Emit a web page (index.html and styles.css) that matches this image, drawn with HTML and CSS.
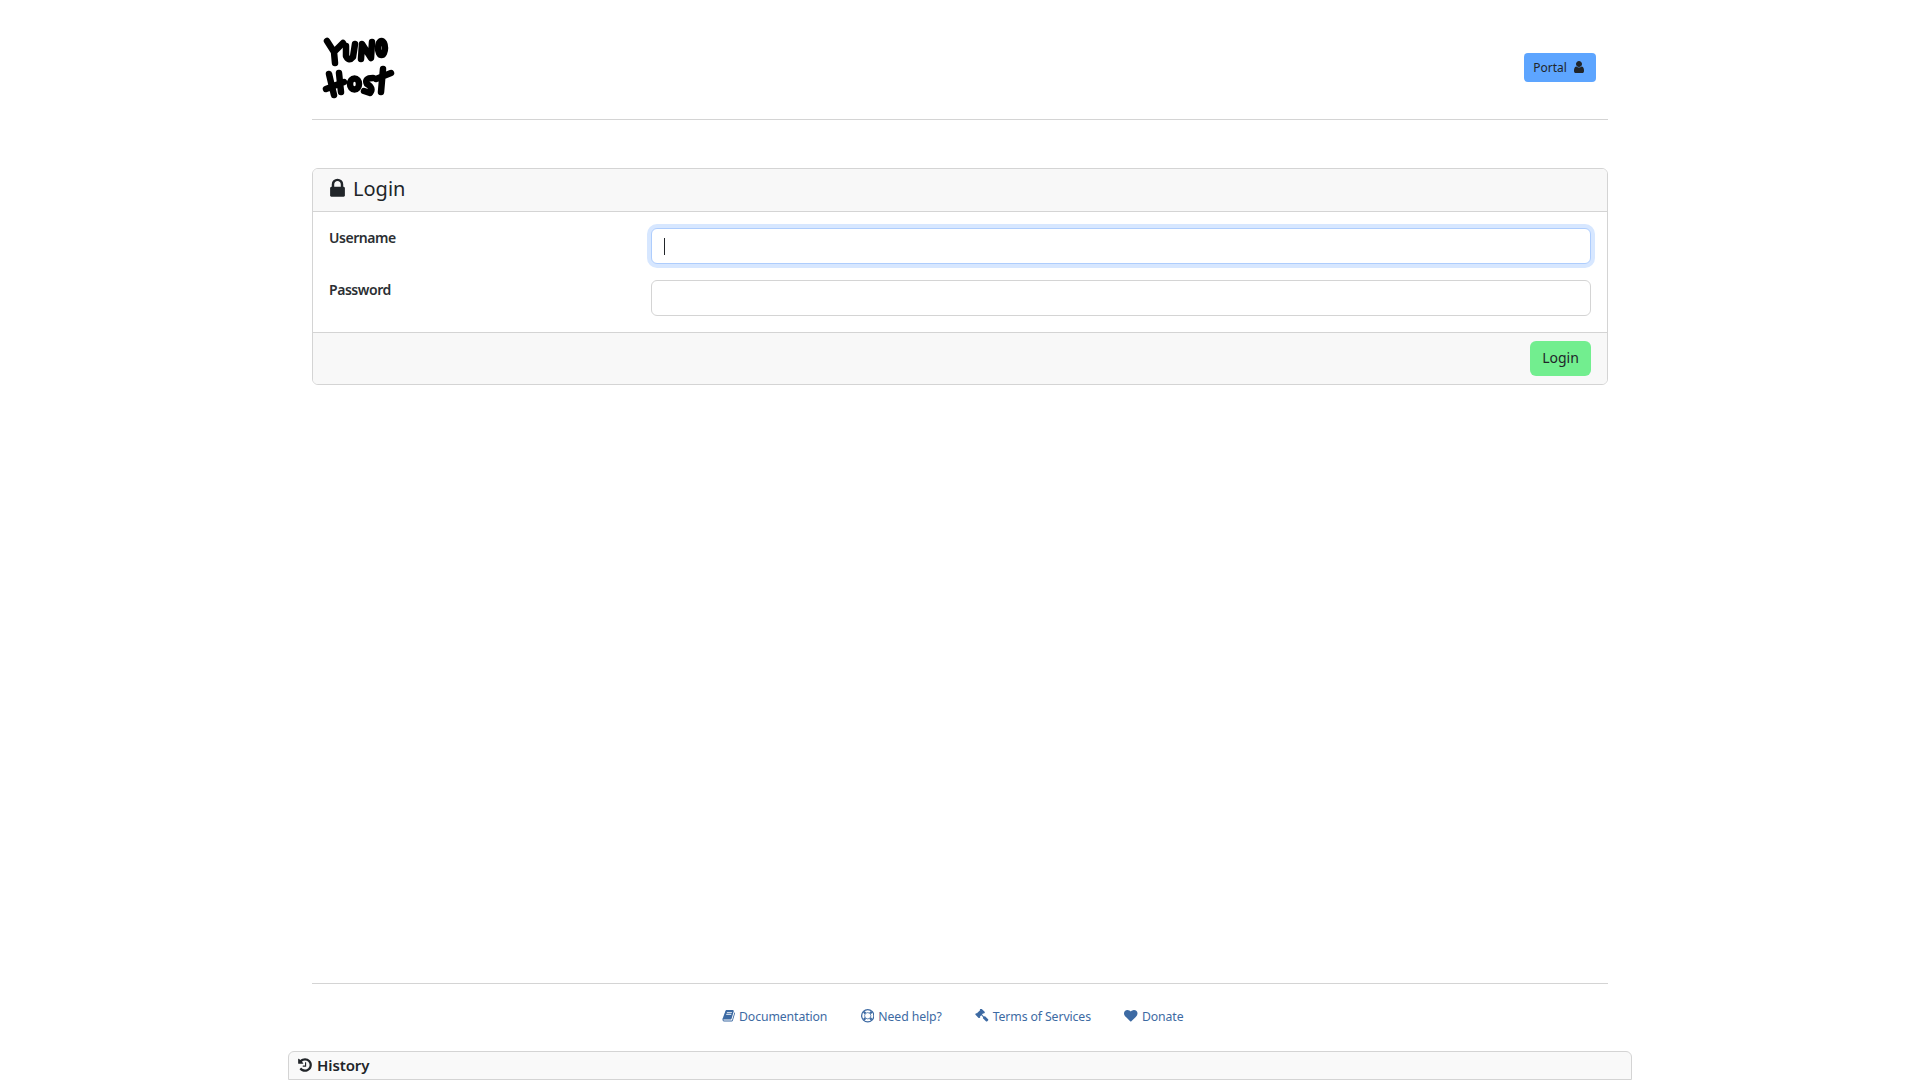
FILE: index.html
```html
<!DOCTYPE html>
<html lang="en">
<head>
<meta charset="utf-8">
<title>YunoHost - Login</title>
<link rel="stylesheet" href="styles.css">
</head>
<body>
<div class="page">
  <header class="topbar">
    <a class="logo" href="#" aria-label="YunoHost">
      <svg class="logo-svg" viewBox="0 0 76 65" aria-hidden="true">
        <g class="logo-strokes">
          <path d="M7 6 L14 17 L23 8 M14 17 L15 28"/>
          <path d="M26 11 L26 21 Q29 27 33 22 L35 9"/>
          <path d="M41 24 L42 9 L51 23 L52 7"/>
          <ellipse cx="61.5" cy="13" rx="3.5" ry="7"/>
          <path d="M9 39 L14 60 M6 54 L24 47 M19 38 L21 57"/>
          <ellipse cx="34.5" cy="49" rx="4.5" ry="5.5"/>
          <path d="M53 43 Q44 43 47 49 Q54 53 50 58 L44 56"/>
          <path d="M63 34 L61 57 M56 44 L71 38"/>
        </g>
      </svg>
    </a>
    <a class="btn btn-portal" href="#">Portal
      <svg class="icon icon-portal" viewBox="0 0 1792 1792" aria-hidden="true"><path d="M1536 1399q0 109-62.5 187t-150.5 78h-854q-88 0-150.5-78t-62.5-187q0-85 8.5-160.5t31.5-152 58.5-131 94-89 134.5-34.5q131 128 313 128t313-128q76 0 134.5 34.5t94 89 58.5 131 31.5 152 8.5 160.5zm-256-887q0 159-112.5 271.5t-271.5 112.5-271.5-112.5-112.5-271.5 112.5-271.5 271.5-112.5 271.5 112.5 112.5 271.5z"/></svg>
    </a>
  </header>

  <main class="main">
    <form class="card" autocomplete="off">
      <h2 class="card-header">
        <svg class="icon icon-lock" viewBox="0 0 1792 1792" aria-hidden="true"><path d="M640 768h512v-192q0-106-75-181t-181-75-181 75-75 181v192zm832 96v576q0 40-28 68t-68 28h-960q-40 0-68-28t-28-68v-576q0-40 28-68t68-28h32v-192q0-184 132-316t316-132 316 132 132 316v192h32q40 0 68 28t28 68z"/></svg>
        <span>Login</span>
      </h2>
      <div class="card-body">
        <div class="field">
          <label class="field-label" for="username">Username</label>
          <div class="input input-focus" id="username"><span class="caret"></span></div>
        </div>
        <div class="field">
          <label class="field-label" for="password">Password</label>
          <div class="input" id="password"></div>
        </div>
      </div>
      <div class="card-footer">
        <button class="btn btn-login" type="button">Login</button>
      </div>
    </form>
  </main>

  <footer class="footer">
    <nav class="footer-nav">
      <a class="footer-link" href="#"><svg class="icon icon-foot" viewBox="0 0 1792 1792" aria-hidden="true"><path d="M1703 478q40 57 18 129l-275 906q-19 64-76.5 107.5t-122.5 43.5h-923q-77 0-148.5-53.5t-99.5-131.5q-24-67-2-127 0-4 3-27t4-37q1-8-3-21.5t-3-19.5q2-11 8-21t16.5-23.5 16.5-23.5q23-38 45-91.5t30-91.5q3-10 .5-30t-.5-28q3-11 17-28t17-23q21-36 42-92t25-90q1-9-2.5-32t.5-28q4-13 22-30.5t22-22.5q19-26 42.5-84.5t27.5-96.5q1-8-3-25.5t-2-26.5q2-8 9-18t18-23 17-21q8-12 16.5-30.5t15-35 16-36 19.5-32 26.5-23.5 36-11.5 47.5 5.5l-1 3q38-9 51-9h761q74 0 114 56t18 130l-274 906q-36 119-71.5 153.5t-128.5 34.5h-869q-27 0-38 15-11 16-1 43 24 70 144 70h923q29 0 56-15.5t35-41.5l300-987q7-22 5-57 38 15 59 43zm-1064 2q-4 13 2 22.5t20 9.5h608q13 0 25.5-9.5t16.5-22.5l21-64q4-13-2-22.5t-20-9.5h-608q-13 0-25.5 9.5t-16.5 22.5zm-83 256q-4 13 2 22.5t20 9.5h608q13 0 25.5-9.5t16.5-22.5l21-64q4-13-2-22.5t-20-9.5h-608q-13 0-25.5 9.5t-16.5 22.5z"/></svg>Documentation</a>
      <a class="footer-link" href="#"><svg class="icon icon-foot" viewBox="128 128 1536 1536" aria-hidden="true"><g class="ring-strokes"><circle class="ring-outer" cx="896" cy="896" r="696"/><circle class="ring-inner" cx="896" cy="896" r="360"/><path class="ring-spokes" d="M624 624L444 444M1168 624L1348 444M1168 1168L1348 1348M624 1168L444 1348"/></g></svg>Need help?</a>
      <a class="footer-link" href="#"><svg class="icon icon-foot" viewBox="0 0 1792 1792" aria-hidden="true"><path d="M1771 1440q0 53-37 90l-107 108q-39 37-91 37-53 0-90-37l-363-364q-38-36-38-90 0-53 43-96l-256-256-126 126q-14 14-34 14t-34-14q2 2 12.5 12t12.5 13 10 11.5 10 13.5 6 13.5 5.5 16.5 1.5 18q0 38-28 68-3 3-16.5 18t-19 20.5-18.5 16.5-22 15.5-22 9-26 4.5q-40 0-68-28l-408-408q-28-28-28-68 0-13 4.5-26t9-22 15.5-22 16.5-18.5 20.5-19 18-16.5q30-28 68-28 10 0 18 1.5t16.5 5.5 13.5 6 13.5 10 11.5 10 13 12.5 12 12.5q-14-14-14-34t14-34l348-348q14-14 34-14t34 14q-2-2-12.5-12t-12.5-13-10-11.5-10-13.5-6-13.5-5.5-16.5-1.5-18q0-38 28-68 3-3 16.5-18t19-20.5 18.5-16.5 22-15.5 22-9 26-4.5q40 0 68 28l408 408q28 28 28 68 0 13-4.5 26t-9 22-15.5 22-16.5 18.5-20.5 19-18 16.5q-30 28-68 28-10 0-18-1.5t-16.5-5.5-13.5-6-13.5-10-11.5-10-13-12.5-12-12.5q14 14 14 34t-14 34l-126 126 256 256q43-43 96-43 52 0 91 37l363 363q37 39 37 91z"/></svg>Terms of Services</a>
      <a class="footer-link" href="#"><svg class="icon icon-foot" viewBox="0 0 1792 1792" aria-hidden="true"><path d="M896 1664q-26 0-44-18l-624-602q-10-8-27.5-26t-55.5-65.5-68-97.5-53.5-121-23.5-138q0-220 127-344t351-124q62 0 126.5 21.5t120 58 95.5 68.5 76 68q36-36 76-68t95.5-68.5 120-58 126.5-21.5q224 0 351 124t127 344q0 221-229 450l-623 600q-18 18-44 18z"/></svg>Donate</a>
    </nav>
  </footer>

  <section class="history">
    <h3 class="history-title">
      <svg class="icon icon-history" viewBox="0 0 1792 1792" aria-hidden="true"><path d="M1664 896q0 156-61 298t-164 245-245 164-298 61q-172 0-327-72.5t-264-204.5q-7-10-6.5-22.5t8.5-20.5l137-138q10-9 25-9 16 2 23 12 73 95 179 147t225 52q104 0 198.5-40.5t163.5-109.5 109.5-163.5 40.5-198.5-40.5-198.5-109.5-163.5-163.5-109.5-198.5-40.5q-98 0-188 35.5t-160 101.5l137 138q31 30 14 69-17 40-59 40h-448q-26 0-45-19t-19-45v-448q0-42 40-59 39-17 69 14l130 129q107-101 244.5-156.5t284.5-55.5q156 0 298 61t245 164 164 245 61 298zm-640-288v448q0 14-9 23t-23 9h-320q-14 0-23-9t-9-23v-64q0-14 9-23t23-9h224v-352q0-14 9-23t23-9h64q14 0 23 9t9 23z"/></svg>
      History
    </h3>
  </section>
</div>
</body>
</html>
```

FILE: styles.css
```css
* { box-sizing: border-box; }
html, body { margin: 0; padding: 0; }
body {
  background: #fff;
  color: #212529;
  font-family: "Noto Sans", "Open Sans", sans-serif;
  font-size: 14px;
  overflow: hidden;
}
a { text-decoration: none; color: inherit; }
.icon { display: inline-block; fill: currentColor; flex: none; }

.page {
  height: 1080px;
  display: flex;
  flex-direction: column;
  align-items: center;
}

.topbar {
  width: 1296px;
  height: 120px;
  flex: none;
  display: flex;
  align-items: center;
  justify-content: space-between;
  padding: 16px 12px 0 8px;
  border-bottom: 1px solid #d4d4d4;
}
.logo { display: block; width: 76px; height: 65px; }
.logo-svg { display: block; width: 76px; height: 65px; }
.logo-strokes {
  fill: none;
  stroke: #000;
  stroke-width: 6.5;
  stroke-linecap: round;
  stroke-linejoin: round;
}

.btn {
  display: inline-flex;
  align-items: center;
  justify-content: center;
  border: 0;
  border-radius: 4px;
  color: #212529;
  font-family: inherit;
}
.btn-portal {
  width: 72px;
  height: 29px;
  gap: 5px;
  font-size: 12px;
  background: #5da5ff;
  padding: 0 1px 1px 0;
}
.icon-portal { width: 14px; height: 14px; }

.main { width: 1296px; flex: 1 1 auto; padding-top: 48px; }

.card {
  display: block;
  background: #fff;
  border: 1px solid #d4d4d4;
  border-radius: 6px;
  overflow: hidden;
}
.card-header {
  margin: 0;
  height: 43px;
  padding: 0 16px 3px;
  display: flex;
  align-items: center;
  gap: 4px;
  font-size: 20px;
  font-weight: 400;
  background: #f8f8f8;
  border-bottom: 1px solid #d4d4d4;
}
.icon-lock { width: 23px; height: 23px; margin-left: -3px; }
.card-body {
  padding: 16px;
  display: flex;
  flex-direction: column;
  gap: 16px;
}
.field {
  display: grid;
  grid-template-columns: 298px 1fr;
  column-gap: 24px;
}
.field-label {
  font-weight: 600;
  font-size: 14px;
  line-height: 20px;
  letter-spacing: -0.45px;
  color: #2b2f33;
}
.input {
  height: 36px;
  background: #fff;
  border: 1px solid #d4d4d4;
  border-radius: 6px;
  display: flex;
  align-items: center;
  padding-left: 12px;
}
.input-focus {
  border-color: #aecdfd;
  box-shadow: 0 0 0 4px #d7e7ff;
}
.caret { width: 1px; height: 17px; background: #212529; }
.card-footer {
  height: 52px;
  padding: 8px 16px 8px;
  display: flex;
  justify-content: flex-end;
  background: #f8f8f8;
  border-top: 1px solid #d4d4d4;
}
.btn-login {
  width: 61px;
  height: 35px;
  background: #72ee8f;
  border-radius: 6px;
  font-size: 14px;
  padding-bottom: 3px;
}

.footer {
  width: 1296px;
  flex: none;
  height: 68px;
  border-top: 1px solid #d4d4d4;
  display: flex;
  justify-content: center;
  padding-top: 22px;
}
.footer-nav { display: flex; gap: 33.5px; height: 20px; margin-left: -15px; }
.footer-link {
  display: flex;
  align-items: center;
  gap: 4px;
  font-size: 12.25px;
  letter-spacing: -0.1px;
  color: #3d6aa3;
}
.icon-foot { width: 13.5px; height: 13.5px; }
.ring-strokes { fill: none; stroke: currentColor; }
.ring-outer { stroke-width: 144; }
.ring-inner { stroke-width: 90; }
.ring-spokes { stroke-width: 250; }

.history {
  width: 1344px;
  flex: none;
  height: 29px;
  background: #f9f9f9;
  border: 1px solid #d4d4d4;
  border-radius: 6px 6px 0 0;
  padding: 0 8px 2px;
  display: flex;
  align-items: center;
}
.history-title {
  margin: 0;
  font-size: 15px;
  font-weight: 600;
  display: flex;
  align-items: center;
  gap: 4px;
  letter-spacing: -0.1px;
}
.icon-history { width: 16px; height: 16px; }
```
